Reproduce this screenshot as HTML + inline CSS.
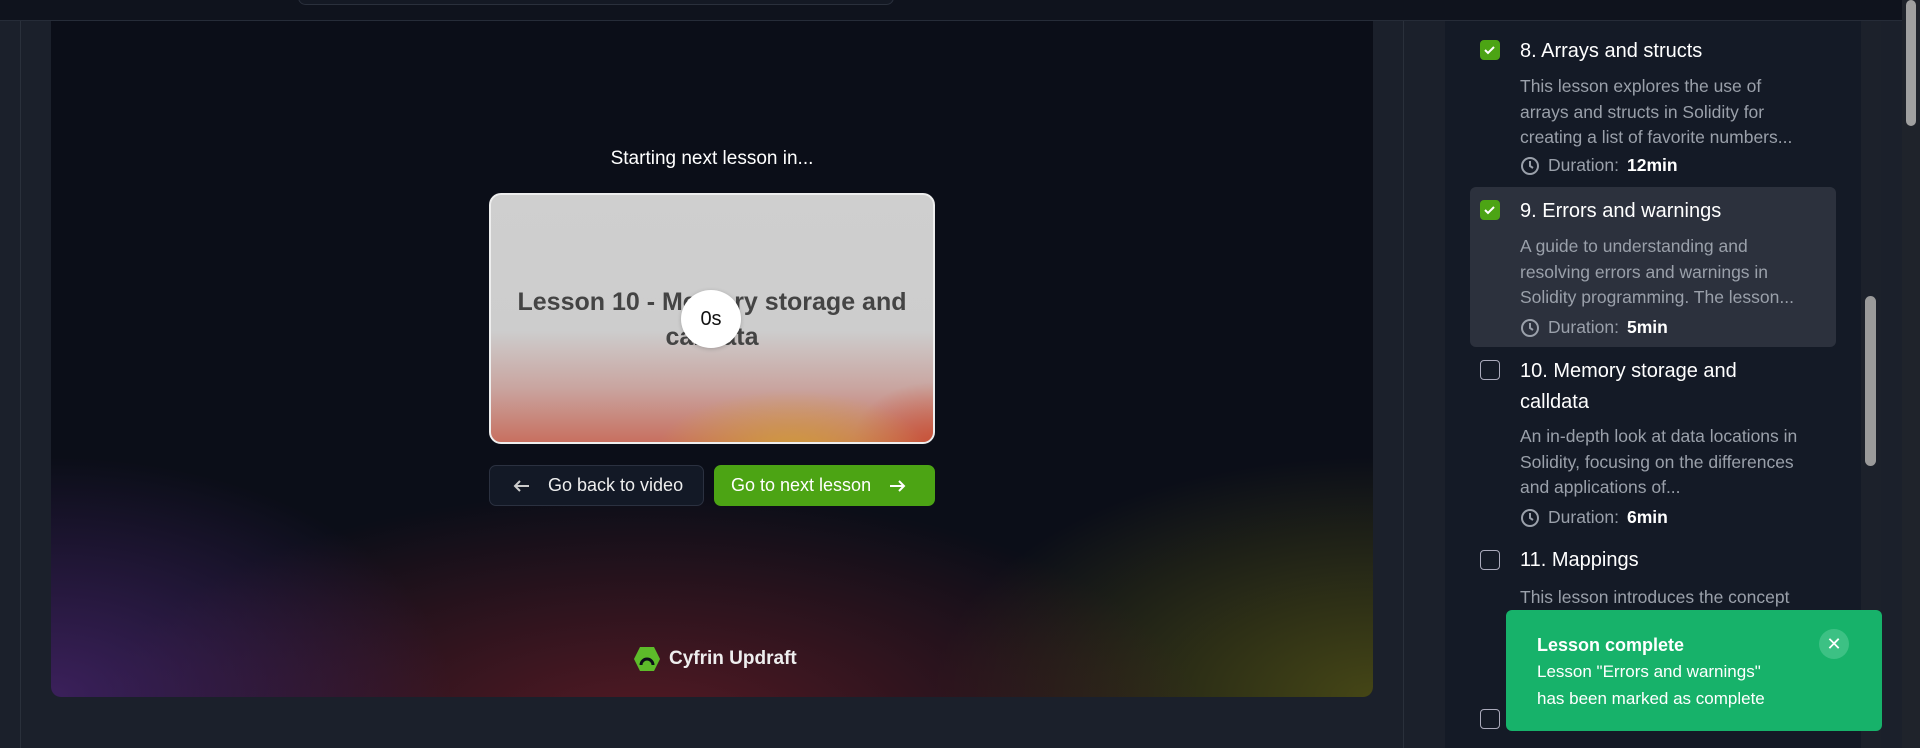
<!DOCTYPE html>
<html><head><meta charset="utf-8"><style>
*{box-sizing:border-box;margin:0;padding:0}
body{width:1920px;height:748px;overflow:hidden;background:#1b202b;font-family:"Liberation Sans",sans-serif;position:relative}
.top{position:absolute;left:0;top:0;width:1902px;height:21px;background:#0f131d;border-bottom:1px solid #262c38}
.search{position:absolute;left:298px;top:-10px;width:596px;height:15px;border:1px solid #2a303c;border-radius:8px;background:#141924}
.lb{position:absolute;left:20px;top:21px;width:1px;height:727px;background:#2a303b}
.rb{position:absolute;left:1403px;top:21px;width:1px;height:727px;background:#2a303b}
.video{position:absolute;left:51px;top:21px;width:1322px;height:676px;border-radius:0 0 10px 10px;overflow:hidden;background:#0b0e18}
.glow{position:absolute;inset:0;background:
radial-gradient(ellipse 500px 300px at 0% 100%,rgba(80,40,120,.7),transparent 80%),
radial-gradient(ellipse 700px 300px at 45% 105%,rgba(110,30,40,.75),transparent 80%),
radial-gradient(ellipse 550px 300px at 100% 100%,rgba(100,100,20,.65),transparent 80%)}
.st{position:absolute;left:0;width:1322px;top:127px;text-align:center;color:#fff;font-size:19px}
.card{position:absolute;left:438px;top:172px;width:446px;height:251px;border-radius:12px;border:2px solid #eee;overflow:hidden;background:linear-gradient(180deg,#cfcfcf 0%,#cdcdcd 55%,#c9a5a0 78%,#c87060 100%)}
.card .warm{position:absolute;inset:0;background:radial-gradient(ellipse 170px 80px at 68% 105%,rgba(210,170,50,.8),transparent 80%),radial-gradient(ellipse 80px 60px at 100% 100%,rgba(200,70,40,.7),transparent)}
.ct{position:absolute;left:0;right:0;top:90px;text-align:center;font-weight:bold;font-size:25px;line-height:35px;color:#444}
.circ{position:absolute;left:190px;top:95px;width:60px;height:58px;border-radius:50%;background:#fff;text-align:center;line-height:58px;font-size:20px;color:#111;box-shadow:0 1px 4px rgba(0,0,0,.2)}
.btn{position:absolute;top:444px;height:41px;border-radius:7px;font-size:18px;line-height:39px;color:#eee;display:flex;align-items:center;gap:16px}
.back{left:438px;width:215px;background:#131926;border:1px solid #2b3140;padding-left:22px}
.next{left:663px;width:221px;background:#4ca414;color:#fff;padding-left:16px;border:1px solid #4ca414}
.logo{position:absolute;left:582px;top:625px;color:#eee;font-weight:bold;font-size:19px;display:flex;align-items:center;gap:8px}
.side{position:absolute;left:1445px;top:21px;width:416px;height:727px;background:#141a26}
.sb{position:absolute;left:1861px;top:21px;width:20px;height:727px;background:#1c212b}
.sbt{position:absolute;left:1865px;top:296px;width:11px;height:170px;border-radius:6px;background:#9a9a9a}
.psb{position:absolute;left:1902px;top:0;width:18px;height:748px;background:#1f232b}
.psbt{position:absolute;left:1906px;top:0;width:10px;height:126px;border-radius:5px;background:#a0a0a0}
.hl{position:absolute;left:1470px;top:187px;width:366px;height:160px;border-radius:6px;background:#2c313d}
.cb{position:absolute;left:1480px;width:20px;height:20px;border:1.5px solid #aab;border-radius:4px}
.cb.on{background:#4ca414;border-color:#4ca414}
.t{position:absolute;left:1520px;color:#fff;font-size:20px;line-height:31px;font-weight:500}
.d{position:absolute;left:1520px;color:#9aa0aa;font-size:17.5px;line-height:25.5px;width:285px}
.du{position:absolute;left:1520px;color:#9aa0aa;font-size:17.5px;display:flex;align-items:center;gap:8px}
.du b{color:#fff}
.toast{position:absolute;left:1506px;top:610px;width:376px;height:121px;border-radius:6px;background:#17b26a;color:#fff;padding:22px 0 0 31px}
.toast h4{font-size:18px;line-height:26px}
.toast p{font-size:17px;line-height:27px}
.x{position:absolute;left:1819px;top:629px;width:30px;height:30px;border-radius:50%;background:#3cc184;color:#fff;text-align:center;line-height:30px;font-size:18px}
</style></head><body>
<div class="top"><div class="search"></div></div>
<div class="lb"></div><div class="rb"></div>
<div class="video"><div class="glow"></div>
<div class="st">Starting next lesson in...</div>
<div class="card"><div class="warm"></div><div class="ct">Lesson 10 - Memory storage and<br>calldata</div><div class="circ">0s</div></div>
<div class="btn back"><svg width="20" height="16" viewBox="0 0 20 16"><path d="M17 8H3M8 3L3 8l5 5" stroke="#ccc" stroke-width="2" fill="none"/></svg>Go back to video</div>
<div class="btn next">Go to next lesson<svg width="20" height="16" viewBox="0 0 20 16"><path d="M3 8h14M12 3l5 5-5 5" stroke="#fff" stroke-width="2" fill="none"/></svg></div>
<div class="logo"><svg width="28" height="26" viewBox="0 0 28 26"><polygon points="7,1 21,1 27,13 21,25 7,25 1,13" fill="#5dbb2a"/><path d="M8 19a6 6 0 0 1 12 0" stroke="#0b0e18" stroke-width="3" fill="none"/></svg>Cyfrin Updraft</div>
</div>
<div class="side"></div>
<div class="sb"></div><div class="sbt"></div>
<div class="psb"></div><div class="psbt"></div>
<div class="hl"></div>
<div class="cb on" style="top:40px"><svg width="17" height="17" viewBox="0 0 17 17"><path d="M4 9l3 3 6-6" stroke="#fff" stroke-width="2" fill="none"/></svg></div>
<div class="t" style="top:36px">8. Arrays and structs</div>
<div class="d" style="top:74px">This lesson explores the use of arrays and structs in Solidity for creating a list of favorite numbers...</div>
<div class="du" style="top:155px"><svg width="20" height="20" viewBox="0 0 20 20"><circle cx="10" cy="10" r="8" stroke="#9aa0aa" stroke-width="2" fill="none"/><path d="M10 5v5l3 2" stroke="#9aa0aa" stroke-width="2" fill="none"/></svg>Duration: <b>12min</b></div>
<div class="cb on" style="top:200px"><svg width="17" height="17" viewBox="0 0 17 17"><path d="M4 9l3 3 6-6" stroke="#fff" stroke-width="2" fill="none"/></svg></div>
<div class="t" style="top:196px">9. Errors and warnings</div>
<div class="d" style="top:234px">A guide to understanding and resolving errors and warnings in Solidity programming. The lesson...</div>
<div class="du" style="top:317px"><svg width="20" height="20" viewBox="0 0 20 20"><circle cx="10" cy="10" r="8" stroke="#9aa0aa" stroke-width="2" fill="none"/><path d="M10 5v5l3 2" stroke="#9aa0aa" stroke-width="2" fill="none"/></svg>Duration: <b>5min</b></div>
<div class="cb" style="top:360px"></div>
<div class="t" style="top:356px">10. Memory storage and<br>calldata</div>
<div class="d" style="top:424px">An in-depth look at data locations in Solidity, focusing on the differences and applications of...</div>
<div class="du" style="top:507px"><svg width="20" height="20" viewBox="0 0 20 20"><circle cx="10" cy="10" r="8" stroke="#9aa0aa" stroke-width="2" fill="none"/><path d="M10 5v5l3 2" stroke="#9aa0aa" stroke-width="2" fill="none"/></svg>Duration: <b>6min</b></div>
<div class="cb" style="top:550px"></div>
<div class="t" style="top:545px">11. Mappings</div>
<div class="d" style="top:585px;width:330px">This lesson introduces the concept</div>
<div class="cb" style="top:709px"></div>
<div class="toast"><h4>Lesson complete</h4><p>Lesson "Errors and warnings"<br>has been marked as complete</p></div>
<div class="x">✕</div>
</body></html>
